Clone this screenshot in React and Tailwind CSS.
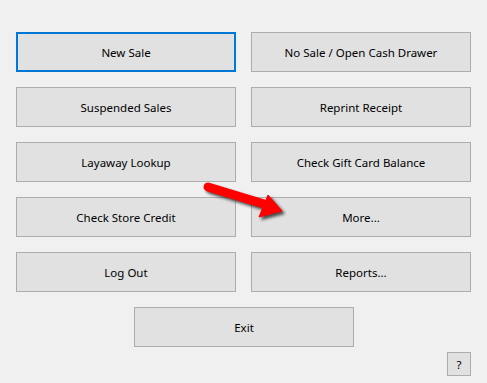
import React from "react";

const Btn = ({ children, focused, className = "" }) => (
  <div
    className={
      "flex items-center justify-center bg-[#e1e1e1] text-[11.5px] leading-none text-black " +
      (focused ? "border-2 border-[#0078d7] " : "border border-[#adadad] ") +
      className
    }
  >
    <span className="translate-y-[1px]">{children}</span>
  </div>
);

export default function App() {
  return (
    <div
      className="relative w-[487px] h-[383px] bg-[#f0f0f0] overflow-hidden"
      style={{ fontFamily: '"Noto Sans", "Open Sans", sans-serif' }}
    >
      <div className="pt-[32px] pl-[16px] flex flex-col w-[471px]">
        <div className="grid grid-cols-[220px_220px] gap-x-[15px] gap-y-[15px] auto-rows-[40px]">
          <Btn focused>New Sale</Btn>
          <Btn>No Sale / Open Cash Drawer</Btn>
          <Btn>Suspended Sales</Btn>
          <Btn>Reprint Receipt</Btn>
          <Btn>Layaway Lookup</Btn>
          <Btn>Check Gift Card Balance</Btn>
          <Btn>Check Store Credit</Btn>
          <Btn>More...</Btn>
          <Btn>Log Out</Btn>
          <Btn>Reports...</Btn>
        </div>
        <div className="flex justify-center mt-[15px] pl-[1px]">
          <Btn className="w-[220px] h-[40px]">Exit</Btn>
        </div>
        <div className="flex justify-end mt-[5px]">
          <Btn className="w-[24px] h-[24px]">?</Btn>
        </div>
      </div>
      <svg
        className="absolute left-0 top-0 pointer-events-none"
        width="487"
        height="383"
      >
        <defs>
          <filter id="sh" x="-20%" y="-20%" width="140%" height="140%">
            <feGaussianBlur stdDeviation="1.5" />
          </filter>
        </defs>
        <g transform="translate(2.5,2.5)" fill="#222" stroke="#222" opacity="0.8" filter="url(#sh)">
          <line x1="208" y1="187" x2="264" y2="204" strokeWidth="9" strokeLinecap="round" />
          <polygon points="282,211 268,195 259,217" />
        </g>
        <g fill="#ff0000" stroke="#ff0000">
          <line x1="208" y1="187" x2="264" y2="204" strokeWidth="9" strokeLinecap="round" />
          <polygon points="282,211 268,195 259,217" strokeWidth="1" strokeLinejoin="round" />
        </g>
      </svg>
    </div>
  );
}
